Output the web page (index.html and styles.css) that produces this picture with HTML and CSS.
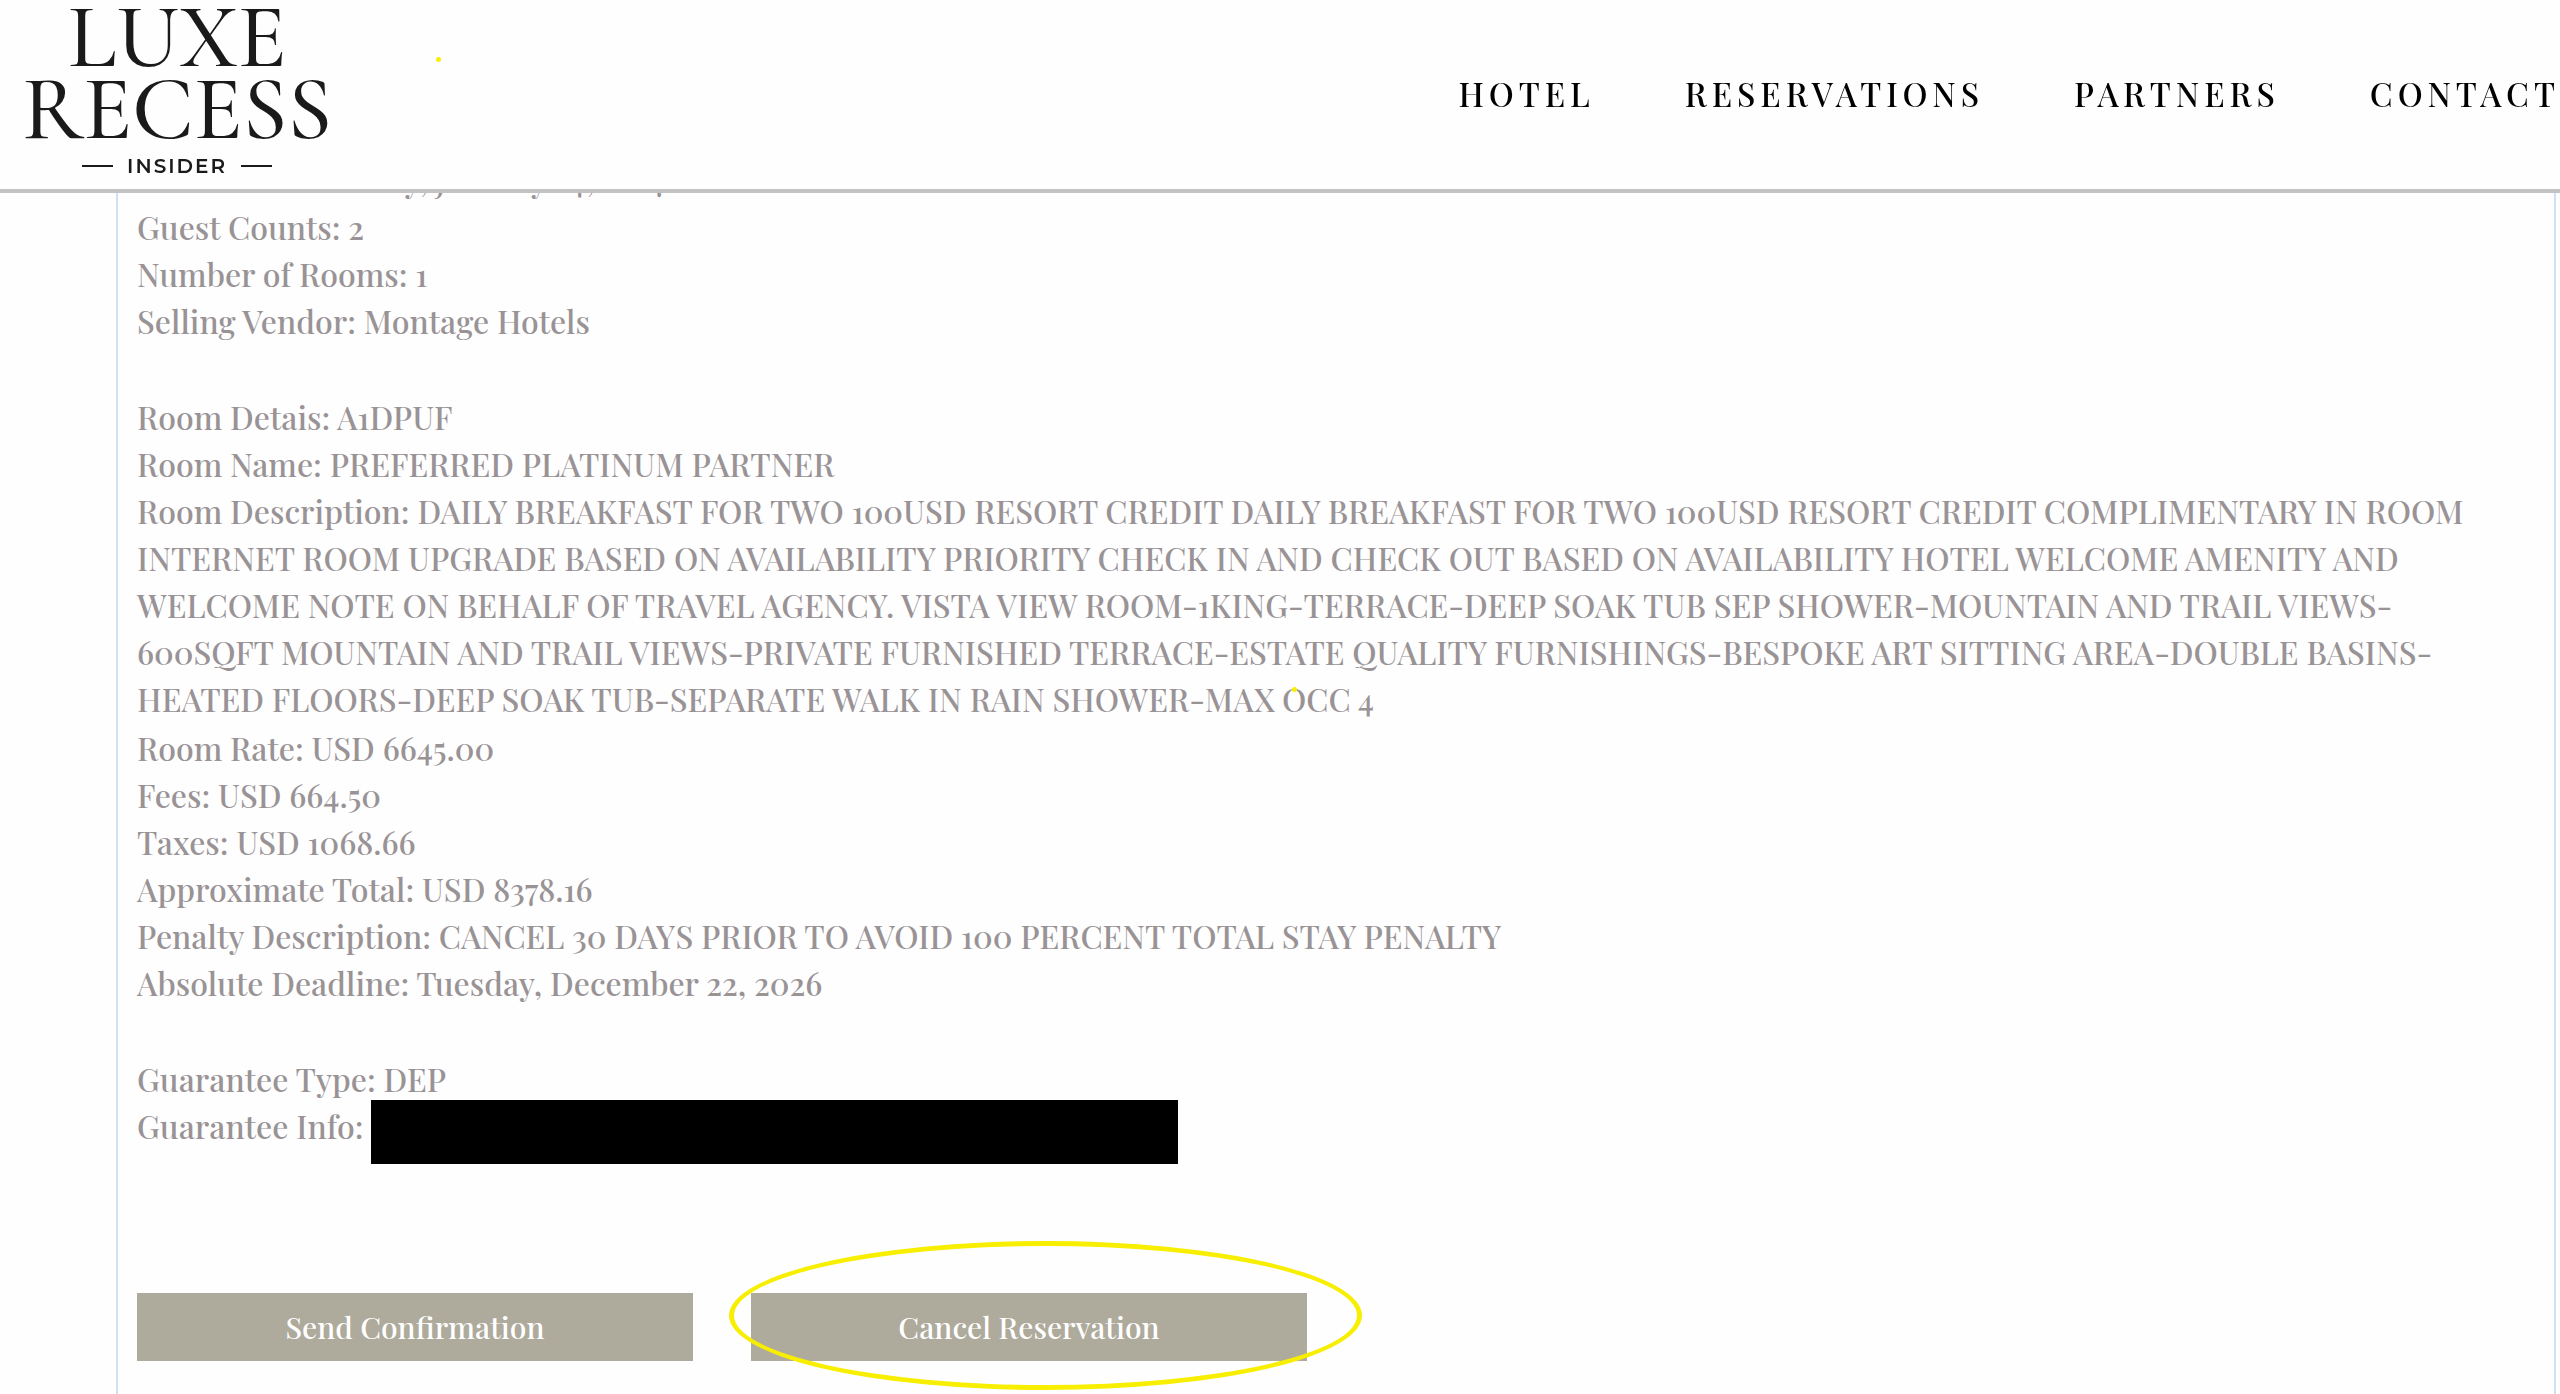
FILE: index.html
```html
<!DOCTYPE html>
<html lang="en">
<head>
    <meta charset="UTF-8">
    <meta name="viewport" content="width=device-width, initial-scale=1.0">
    <title>Luxe Recess Insider</title>
    <link rel="stylesheet" href="styles.css">
</head>
<body>
    <header class="header">
        <a class="logo" href="#">
            <span class="logo-name">LUXE</span>
            <span class="logo-name">RECESS</span>
            <span class="logo-sub">INSIDER</span>
        </a>
        <nav class="nav">
            <a href="#">HOTEL</a>
            <a href="#">RESERVATIONS</a>
            <a href="#">PARTNERS</a>
            <a href="#">CONTACT</a>
        </nav>
    </header>

    <main class="reservation">
        <section class="details">
            <p>Check-Out: Sunday, January 24, 2027</p>
            <p>Guest Counts: 2</p>
            <p>Number of Rooms: 1</p>
            <p>Selling Vendor: Montage Hotels</p>
        </section>

        <section class="details">
            <p>Room Detais: A1DPUF</p>
            <p>Room Name: PREFERRED PLATINUM PARTNER</p>
            <p class="description">Room Description: DAILY BREAKFAST FOR TWO 100USD RESORT CREDIT DAILY BREAKFAST FOR TWO 100USD RESORT CREDIT COMPLIMENTARY IN ROOM INTERNET ROOM UPGRADE BASED ON AVAILABILITY PRIORITY CHECK IN AND CHECK OUT BASED ON AVAILABILITY HOTEL WELCOME AMENITY AND WELCOME NOTE ON BEHALF OF TRAVEL AGENCY. VISTA VIEW ROOM-1KING-TERRACE-DEEP SOAK TUB SEP SHOWER-MOUNTAIN AND TRAIL VIEWS-600SQFT MOUNTAIN AND TRAIL VIEWS-PRIVATE FURNISHED TERRACE-ESTATE QUALITY FURNISHINGS-BESPOKE ART SITTING AREA-DOUBLE BASINS-HEATED FLOORS-DEEP SOAK TUB-SEPARATE WALK IN RAIN SHOWER-MAX OCC 4</p>
            <p>Room Rate: USD 6645.00</p>
            <p>Fees: USD 664.50</p>
            <p>Taxes: USD 1068.66</p>
            <p>Approximate Total: USD 8378.16</p>
            <p>Penalty Description: CANCEL 30 DAYS PRIOR TO AVOID 100 PERCENT TOTAL STAY PENALTY</p>
            <p>Absolute Deadline: Tuesday, December 22, 2026</p>
        </section>

        <section class="details">
            <p>Guarantee Type: DEP</p>
            <p class="guarantee">Guarantee Info: <span class="redacted"></span></p>
        </section>

        <div class="actions">
            <button type="button" class="btn">Send Confirmation</button>
            <div class="marked">
                <button type="button" class="btn">Cancel Reservation</button>
                <span class="circle"></span>
            </div>
        </div>
    </main>

    <span class="dot dot-header"></span>
    <span class="dot dot-text"></span>
</body>
</html>
```
FILE: styles.css
```css
:root {
    --text: #999396;
    --button: #aeaa9c;
    --marker: #f7ee00;
    --serif: "Playfair Display", "Liberation Serif", serif;
}
* {
    box-sizing: border-box;
}
body {
    margin: 0;
    height: 100vh;
    overflow: hidden;
    background: #fefefe;
    font-family: var(--serif);
    font-weight: 500;
    color: var(--text);
}
.header {
    position: fixed;
    top: 0;
    left: 0;
    right: 0;
    z-index: 2;
    display: flex;
    justify-content: space-between;
    height: 193px;
    padding-left: 22px;
    background: #fefefe;
    border-bottom: 4px solid #c3c3c3;
}
.logo {
    display: flex;
    flex-direction: column;
    align-items: center;
    padding-top: 2px;
    color: #1a1a1a;
    text-decoration: none;
}
.logo-name {
    font-family: "Cormorant Garamond", "Liberation Serif", serif;
    font-size: 90px;
    font-weight: 500;
    line-height: 72px;
}
.logo-sub {
    display: flex;
    align-items: center;
    gap: 14px;
    margin-top: 8px;
    font-family: Montserrat, Lato, sans-serif;
    font-size: 20px;
    font-weight: 600;
    line-height: 24px;
    letter-spacing: 2px;
}
.logo-sub::before,
.logo-sub::after {
    content: "";
    width: 31px;
    height: 2px;
    background: #1a1a1a;
}
.nav {
    display: flex;
    align-items: center;
    gap: 90px;
    padding-bottom: 4px;
}
.nav a {
    color: #000;
    font-size: 33px;
    line-height: 44px;
    letter-spacing: 5px;
    text-decoration: none;
}

/* reservation card */
.reservation {
    min-height: 100vh;
    margin: 0 4px 0 116px;
    padding: 156px 60px 0 19px;
    border: 2px solid #cfe0f2;
    border-top: 0;
    border-bottom: 0;
}
.details {
    margin-bottom: 49px;
    font-size: 32px;
    line-height: 47px;
}
.details p {
    margin: 0;
}
.details .description {
    padding: 0 0 2px;
}
.guarantee {
    position: relative;
}
.redacted {
    position: absolute;
    top: -2px;
    left: 234px;
    width: 807px;
    height: 64px;
    background: #000;
}
.actions {
    display: flex;
    gap: 58px;
    margin-top: 144px;
}
.btn {
    width: 556px;
    height: 68px;
    border: 0;
    background: var(--button);
    color: #fff;
    font-family: var(--serif);
    font-size: 30px;
    font-weight: 500;
    cursor: pointer;
}

/* yellow pen marks */
.marked {
    position: relative;
}
.circle {
    position: absolute;
    top: -52px;
    left: -22px;
    width: 633px;
    height: 149px;
    border: 5px solid var(--marker);
    border-radius: 50%;
    pointer-events: none;
}
.dot {
    position: absolute;
    z-index: 3;
    width: 5px;
    height: 5px;
    border-radius: 50%;
    background: var(--marker);
}
.dot-header {
    top: 57px;
    left: 436px;
}
.dot-text {
    top: 687px;
    left: 1292px;
}
```
